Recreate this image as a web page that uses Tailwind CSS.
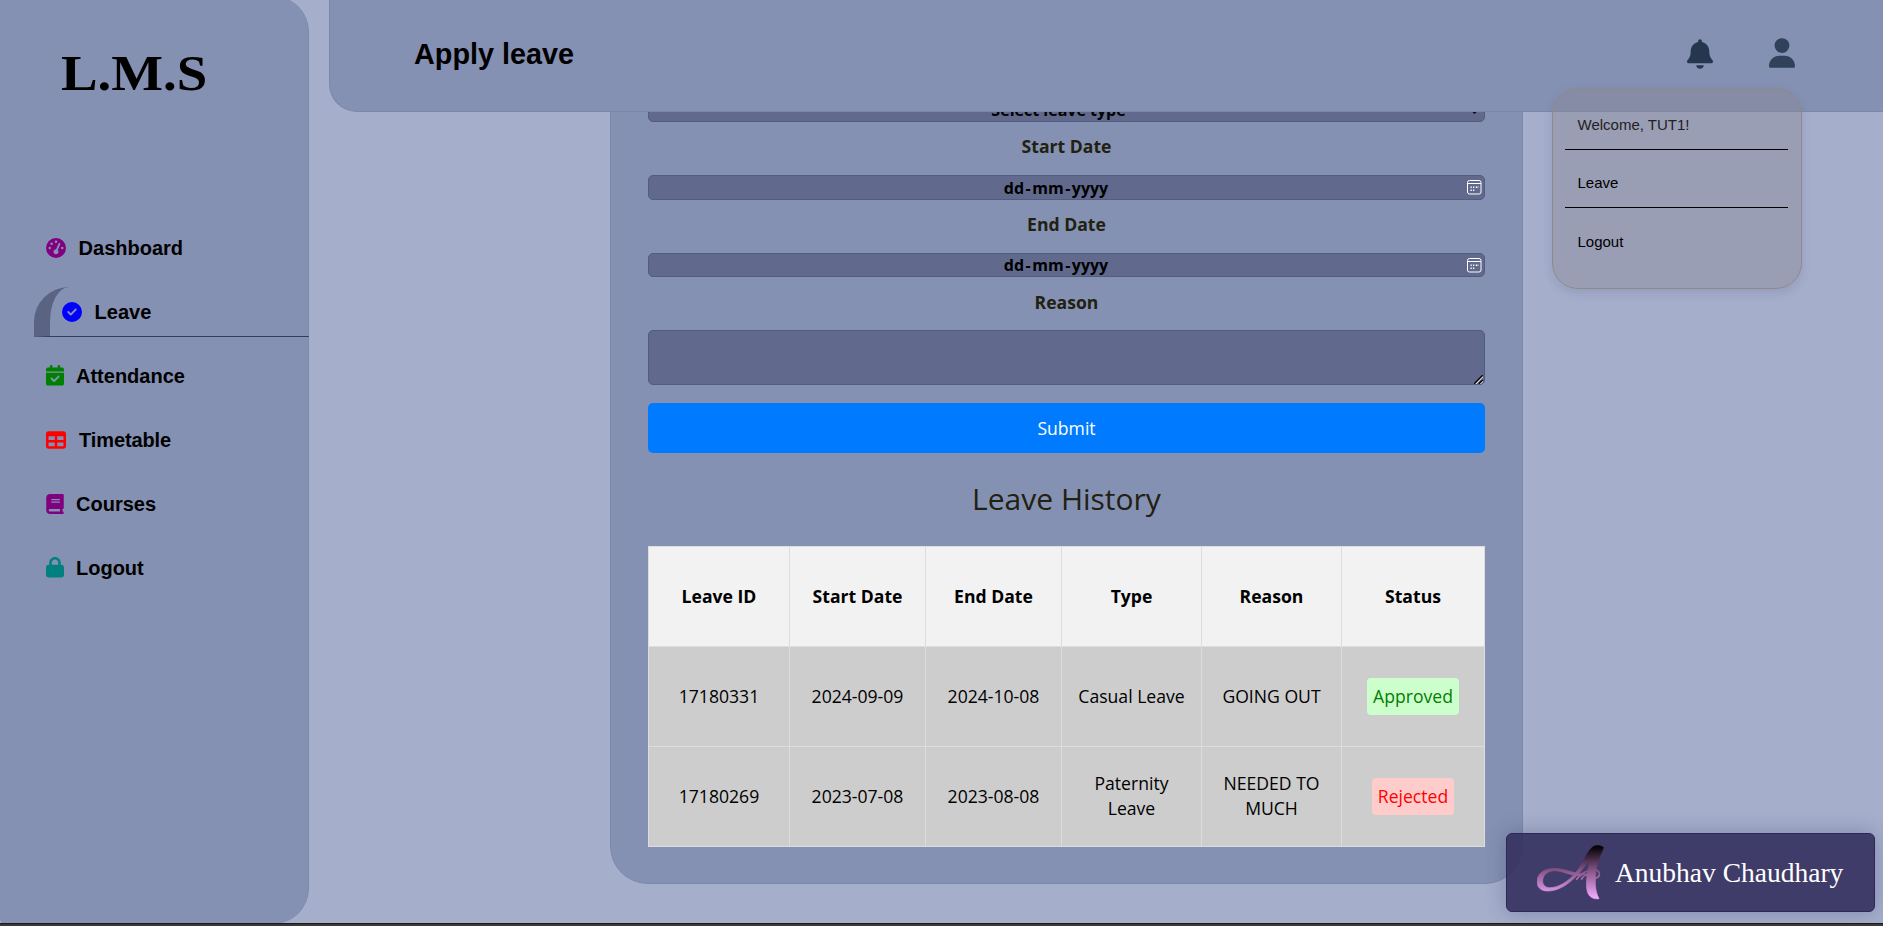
<!DOCTYPE html>
<html lang="en">
<head>
<meta charset="utf-8">
<title>Apply leave</title>
<script src="https://cdn.jsdelivr.net/npm/@tailwindcss/browser@4"></script>
</head>
<body class="relative flex h-[926px] w-[1883px] overflow-hidden bg-[#a5aecb] font-['Liberation_Sans',sans-serif] text-black">

  <!-- Sidebar -->
  <aside class="-mt-1 flex h-[928px] w-[309px] shrink-0 flex-col rounded-r-[36px] rounded-bl-[5px] border-r border-[#7b8aae] bg-[#8591b2]">
    <div class="mt-[43px] ml-[61px] h-[67px] origin-left scale-x-[1.065] font-['Liberation_Serif',serif] text-[51.5px] leading-[67px] font-bold">L.M.S</div>
    <nav class="mt-[117px] flex flex-col gap-[15px] pl-[34px] text-[20px] font-bold">
      <a class="flex h-[49px] items-center gap-[12.6px] pl-3">
        <svg class="h-5 w-5 text-[#800080]" viewBox="0 0 512 512" fill="currentColor"><path d="M0 256a256 256 0 1 1 512 0A256 256 0 1 1 0 256zM288 96a32 32 0 1 0 -64 0 32 32 0 1 0 64 0zM256 416c35.3 0 64-28.7 64-64c0-17.4-6.9-33.1-18.1-44.6L366 161.7c5.3-12.1-.2-26.3-12.3-31.6s-26.3 .2-31.6 12.3L257.9 288c-.6 0-1.3 0-1.9 0c-35.3 0-64 28.7-64 64s28.7 64 64 64zM176 144a32 32 0 1 0 -64 0 32 32 0 1 0 64 0zM96 288a32 32 0 1 0 0-64 32 32 0 1 0 0 64zm352-32a32 32 0 1 0 -64 0 32 32 0 1 0 64 0z"/></svg>
        <span>Dashboard</span>
      </a>
      <a class="-mr-px -mb-px flex h-[50px] items-center gap-[12.6px] rounded-tl-[35px] border-b border-l-[16px] border-b-[#343b5e] border-l-[#5b6383] pt-px pl-3">
        <svg class="h-5 w-5 text-[#0000ff]" viewBox="0 0 512 512" fill="currentColor"><path d="M256 512A256 256 0 1 0 256 0a256 256 0 1 0 0 512zM369 209L241 337c-9.4 9.4-24.6 9.4-33.9 0l-64-64c-9.4-9.4-9.4-24.6 0-33.9s24.6-9.4 33.9 0l47 47L335 175c9.4-9.4 24.6-9.4 33.9 0s9.4 24.6 0 33.9z"/></svg>
        <span>Leave</span>
      </a>
      <a class="flex h-[49px] items-center gap-[12px] pl-3">
        <svg class="h-[20.6px] w-[18px] text-[#008000]" viewBox="0 0 448 512" fill="currentColor"><path d="M128 0c17.7 0 32 14.3 32 32V64H288V32c0-17.7 14.3-32 32-32s32 14.3 32 32V64h48c26.5 0 48 21.5 48 48v48H0V112C0 85.5 21.5 64 48 64H96V32c0-17.7 14.3-32 32-32zM0 192H448V464c0 26.5-21.5 48-48 48H48c-26.5 0-48-21.5-48-48V192zM329 305c9.4-9.4 9.4-24.6 0-33.9s-24.6-9.4-33.9 0l-95 95-47-47c-9.4-9.4-24.6-9.4-33.9 0s-9.4 24.6 0 33.9l64 64c9.4 9.4 24.6 9.4 33.9 0L329 305z"/></svg>
        <span>Attendance</span>
      </a>
      <a class="flex h-[49px] items-center gap-[13px] pl-3">
        <svg class="h-5 w-5 text-[#ff0000]" viewBox="0 0 512 512" fill="currentColor"><path d="M64 256V160H224v96H64zm0 64H224v96H64V320zm224 96V320H448v96H288zM448 256H288V160H448v96zM64 32C28.7 32 0 60.7 0 96V416c0 35.3 28.7 64 64 64H448c35.3 0 64-28.7 64-64V96c0-35.3-28.7-64-64-64H64z"/></svg>
        <span class="tracking-[-0.1px]">Timetable</span>
      </a>
      <a class="flex h-[49px] items-center gap-[12px] pl-3">
        <svg class="h-5 w-[18px] text-[#800080]" viewBox="0 0 448 512" fill="currentColor"><path d="M96 0C43 0 0 43 0 96V416c0 53 43 96 96 96H384h32c17.7 0 32-14.3 32-32s-14.3-32-32-32V384c17.7 0 32-14.3 32-32V32c0-17.7-14.3-32-32-32H384 96zm0 384H352v64H96c-17.7 0-32-14.3-32-32s14.3-32 32-32zm32-240c0-8.8 7.2-16 16-16H336c8.8 0 16 7.2 16 16s-7.2 16-16 16H144c-8.8 0-16-7.2-16-16zm16 48H336c8.8 0 16 7.2 16 16s-7.2 16-16 16H144c-8.8 0-16-7.2-16-16s7.2-16 16-16z"/></svg>
        <span>Courses</span>
      </a>
      <a class="flex h-[49px] items-center gap-[12px] pl-3">
        <svg class="h-[20.6px] w-[18px] text-[#008080]" viewBox="0 0 448 512" fill="currentColor"><path d="M144 144v48H304V144c0-44.2-35.8-80-80-80s-80 35.8-80 80zM80 192V144C80 64.5 144.5 0 224 0s144 64.5 144 144v48h16c35.3 0 64 28.7 64 64V448c0 35.3-28.7 64-64 64H64c-35.3 0-64-28.7-64-64V256c0-35.3 28.7-64 64-64H80z"/></svg>
        <span>Logout</span>
      </a>
    </nav>
  </aside>

  <!-- Scrolled content, sliding under the header -->
  <main class="ml-[301px] h-[884px] w-[913px] shrink-0 rounded-b-[38px] border border-t-0 border-[#7b88ab] bg-[#8591b2] px-[37px] pt-[96px] text-center font-['Open_Sans',sans-serif] text-[17.6px]">
    <div class="relative flex h-[26px] items-center justify-center rounded-[5px] border border-[#525b80] bg-[#616a8d] pt-[2px] pr-[16px] text-[16px] font-bold">
      <span>Select leave type</span>
      <svg class="absolute top-[10px] right-[4px] h-[7px] w-[11px]" viewBox="0 0 11 7" fill="none" stroke="#000" stroke-width="2"><path d="M1 1l4.500 4.500L10 1"/></svg>
    </div>
    <div class="h-[53px] text-[17.6px] leading-[49px] font-bold text-[#212111]">Start Date</div>
    <div class="flex h-[25px] items-center rounded-[5px] border border-[#525b80] bg-[#616a8d] pr-[2px] text-[16px] font-bold">
      <span class="flex-1 -translate-x-[2px]">dd<span class="mx-[1.500px]">-</span>mm<span class="mx-[1.500px]">-</span>yyyy</span>
      <svg class="h-[15px] w-[15px]" viewBox="0 0 15 15" fill="none" stroke="#fff"><rect x=".5" y=".5" width="13.500" height="13.500" rx="2"/><path d="M.5 3.500h13.500"/><path d="M6 7.200h1.300M8.800 7.200h1.300M3.500 10.200h1.300M6 10.200h1.300M3.500 7.200h1.300M10.600 7.200h.7" stroke-width="1.500"/></svg>
    </div>
    <div class="h-[53px] leading-[49px] font-bold text-[#212111]">End Date</div>
    <div class="flex h-[24px] items-center rounded-[5px] border border-[#525b80] bg-[#616a8d] pr-[2px] text-[16px] font-bold">
      <span class="flex-1 -translate-x-[2px]">dd<span class="mx-[1.500px]">-</span>mm<span class="mx-[1.500px]">-</span>yyyy</span>
      <svg class="h-[15px] w-[15px]" viewBox="0 0 15 15" fill="none" stroke="#fff"><rect x=".5" y=".5" width="13.500" height="13.500" rx="2"/><path d="M.5 3.500h13.500"/><path d="M6 7.200h1.300M8.800 7.200h1.300M3.500 10.200h1.300M6 10.200h1.300M3.500 7.200h1.300M10.600 7.200h.7" stroke-width="1.500"/></svg>
    </div>
    <div class="h-[53px] leading-[50px] font-bold text-[#212111]">Reason</div>
    <div class="flex h-[55px] items-end justify-end rounded-[5px] border border-[#525b80] bg-[#616a8d] pr-px">
      <svg class="h-[9px] w-[9px]" viewBox="0 0 9 9" fill="none"><path d="M1.500 9L9 1.500M6 9l3-3" stroke="#fff" stroke-width="1.200"/><path d="M.2 8.800L8.800.2M5 8.800L8.800 5" stroke="#000" stroke-width="1.500"/></svg>
    </div>
    <div class="mt-[18px] h-[50px] rounded-[5px] bg-[#007bff] leading-[50px] text-white">Submit</div>
    <h2 class="mt-[22px] h-[71px] text-[30px] leading-[48px] text-[#212111]">Leave History</h2>
    <table class="w-[837px] table-fixed border-collapse border border-[#ecece4] leading-[25px]">
      <colgroup><col class="w-[141px]"><col class="w-[136px]"><col class="w-[136px]"><col class="w-[140px]"><col class="w-[140px]"><col class="w-[143px]"></colgroup>
      <tr class="h-[100px] bg-[#f2f2f2] font-bold">
        <td class="border border-[#dddddd]">Leave ID</td><td class="border border-[#dddddd]">Start Date</td><td class="border border-[#dddddd]">End Date</td><td class="border border-[#dddddd]">Type</td><td class="border border-[#dddddd]">Reason</td><td class="border border-[#dddddd]">Status</td>
      </tr>
      <tr class="h-[100px] bg-[#cdcdcd]">
        <td class="border border-[#dddddd]">17180331</td><td class="border border-[#dddddd]">2024-09-09</td><td class="border border-[#dddddd]">2024-10-08</td><td class="border border-[#dddddd]">Casual Leave</td><td class="border border-[#dddddd]">GOING OUT</td><td class="border border-[#dddddd]"><span class="inline-block h-[37px] rounded-[4px] bg-[#ccffcc] px-1.5 leading-[37px] text-[#008000]">Approved</span></td>
      </tr>
      <tr class="h-[100px] bg-[#cdcdcd]">
        <td class="border border-[#dddddd]">17180269</td><td class="border border-[#dddddd]">2023-07-08</td><td class="border border-[#dddddd]">2023-08-08</td><td class="border border-[#dddddd] px-5 pb-[2px]">Paternity Leave</td><td class="border border-[#dddddd] px-5 pb-[2px]">NEEDED TO MUCH</td><td class="border border-[#dddddd]"><span class="inline-block h-[37px] rounded-[4px] bg-[#ffcccc] px-1.5 leading-[37px] text-[#ff0000]">Rejected</span></td>
      </tr>
    </table>
  </main>

  <!-- Header over the scrolled content -->
  <header class="absolute top-0 right-0 flex h-[112px] w-[1554px] justify-between rounded-bl-[28px] border-b border-l border-[#7b88ab] bg-[#8591b2] pr-[88px] pl-[84px]">
    <h1 class="mt-[34px] text-[28.8px] leading-[40px] font-bold">Apply leave</h1>
    <div class="mt-[38px] flex h-[31px] gap-[56px]">
      <svg class="mt-px h-[30px] w-[26px] text-[#24374e]" viewBox="0 0 448 512" fill="currentColor"><path d="M224 0c-17.7 0-32 14.3-32 32V51.200C119 66 64 130.600 64 208v18.800c0 47-17.3 92.400-48.500 127.600l-7.400 8.300c-8.400 9.400-10.400 22.900-5.300 34.400S19.400 416 32 416H416c12.600 0 24-7.400 29.200-18.900s3.100-25-5.300-34.400l-7.400-8.300C401.300 319.200 384 273.900 384 226.800V208c0-77.400-55-142-128-156.800V32c0-17.7-14.300-32-32-32zm45.300 493.300c12-12 18.700-28.300 18.700-45.300H224 160c0 17 6.700 33.300 18.700 45.300s28.300 18.700 45.300 18.700s33.300-6.700 45.300-18.700z"/></svg>
      <svg class="h-[30px] w-[26px] text-[#30425a]" viewBox="0 0 448 512" fill="currentColor"><path d="M224 256A128 128 0 1 0 224 0a128 128 0 1 0 0 256zm-45.700 48C79.800 304 0 383.800 0 482.300C0 498.700 13.300 512 29.700 512H418.300c16.400 0 29.700-13.300 29.700-29.700C448 383.800 368.200 304 269.700 304H178.300z"/></svg>
    </div>
  </header>

  <!-- Account menu -->
  <div class="absolute top-[88px] left-[1552px] h-[201px] w-[250px] rounded-[26px] border border-[#8f8a88] bg-[rgba(136,134,147,0.375)] px-3 pt-[3px] text-[15px] shadow-[0_4px_10px_rgba(60,70,120,0.16)]">
    <div class="mr-px h-[58px] border-b border-black pt-[24px] pl-[12.500px] leading-[18px] text-[#222]">Welcome, TUT1!</div>
    <div class="mr-px h-[58px] border-b border-black pt-[24px] pl-[12.500px] leading-[18px]">Leave</div>
    <div class="pt-[25px] pl-[12.500px] leading-[18px]">Logout</div>
  </div>

  <!-- Author badge -->
  <div class="absolute top-[833px] left-[1506px] flex h-[79px] w-[369px] items-center rounded-[6px] border border-[#2c285a] bg-[rgba(52,48,94,0.9)] pl-[30px] shadow-[0_0_20px_rgba(40,50,90,0.3)]">
    <svg class="h-[55px] w-[67px] shrink-0" viewBox="170 136 201 165">
      <defs><linearGradient id="ink" gradientUnits="userSpaceOnUse" x1="0" y1="142" x2="0" y2="297"><stop offset="0" stop-color="#050205"/><stop offset=".45" stop-color="#865385"/><stop offset="1" stop-color="#f6acff"/></linearGradient></defs>
      <g fill="url(#ink)" stroke="url(#ink)" stroke-width="2">
        <path d="M340 140C350 136 362 138 369 143C371 148 352 176 348 206C344 240 342 272 356 297C340 299 328 293 322 279C314 258 320 214 331 176C320 192 309 206 299 218C268 253 235 274 203 274C182 274 170 263 170 246C170 222 192 206 222 206C251 206 276 220 305 222L304 228C275 231 250 214 225 213C203 212 187 226 187 244C187 256 195 264 208 264C235 264 264 245 286 219C308 193 320 153 340 140Z"/>
      </g>
      <path d="M289 239C300 225 316 211 340 210C360 210 362 229 348 235C337 238 325 226 305 222M304 238C310 228 320 222 328 220" fill="none" stroke="url(#ink)" stroke-width="5" stroke-linecap="round"/>
    </svg>
    <span class="ml-[11px] font-['Liberation_Serif',serif] text-[27.500px] whitespace-nowrap text-white">Anubhav Chaudhary</span>
  </div>

  <div class="absolute bottom-0 left-0 h-[3px] w-full border-t border-[#1c1b1b] bg-[#3b3936]"></div>
</body>
</html>
